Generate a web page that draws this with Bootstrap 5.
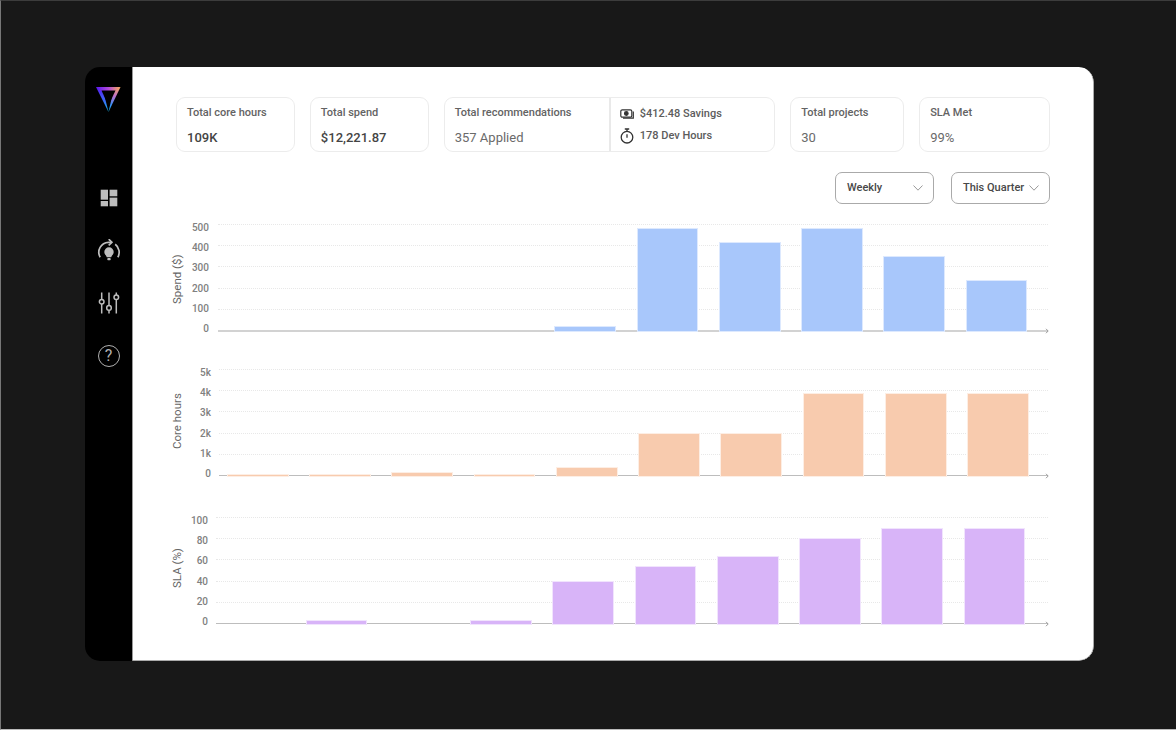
<!DOCTYPE html>
<html lang="en">
<head>
    <meta charset="UTF-8">
    <meta name="viewport" content="width=device-width, initial-scale=1.0">
    <title>Usage dashboard</title>
    <link href="https://cdn.jsdelivr.net/npm/bootstrap@5.3.0/dist/css/bootstrap.min.css" rel="stylesheet">
    <style>
        body {
            background: #181818;
            font-family: Roboto, "Liberation Sans", sans-serif;
            overflow: hidden;
        }
        .page-frame {
            height: 730px;
            padding: 66px 0 0 84px;
            border-left: 1px solid #777;
            border-top: 1px solid #3c3c3c;
            border-bottom: 1px solid #bbb;
        }
        .app-window {
            width: 1009px;
            height: 594px;
            border-radius: 15px;
            overflow: hidden;
            background: #000;
        }
        .side-rail {
            width: 47px;
            padding-top: 20px;
        }
        .rail-logo { margin-bottom: 74px; }
        .rail-icon {
            width: 24px;
            height: 24px;
            margin-bottom: 28.5px;
        }
        .rail-help {
            width: 22px;
            height: 22px;
            margin-top: 1px;
            border: 1.6px solid #b0b0b0;
            border-radius: 50%;
            color: #b0b0b0;
            font-size: 16px;
            line-height: 1;
        }
        .main-pane {
            min-width: 0;
            background: #fff;
            padding: 30px 43px 0 37px;
            border-left: 1px solid #999;
            border-right: 1px solid #aaa;
            border-bottom: 1px solid #aaa;
            border-radius: 0 15px 15px 0;
        }
        .stat-row {
            margin-left: 6px;
            gap: 15px;
        }
        .stat-box {
            height: 55px;
            border: 1px solid #ececec;
            border-radius: 9px;
            padding: 7px 10px;
        }
        .w-core { width: 119px; }
        .w-spend { width: 119px; }
        .w-recs { width: 332px; padding: 0; }
        .w-projects { width: 114px; }
        .w-sla { width: 131px; }
        .recs-left {
            width: 166px;
            padding: 7px 10px;
            border-right: 2px solid #e9e9e9;
        }
        .recs-right { padding: 6px 9px; }
        .stat-label {
            font-size: 11px;
            line-height: 15px;
            font-weight: 500;
            color: #636363;
        }
        .stat-value {
            margin-top: 9px;
            font-size: 13px;
            line-height: 17px;
            font-weight: 500;
            color: #444;
        }
        .stat-value.soft { color: #6a6a6a; font-weight: 400; }
        .saving-line {
            height: 20px;
            gap: 6px;
            font-size: 11px;
            font-weight: 500;
            color: #5c5c5c;
        }
        .saving-line + .saving-line { margin-top: 2px; }
        .filter-row {
            margin: 20px 0 0 6px;
            gap: 17px;
        }
        .filter-btn {
            width: 99px;
            height: 32px;
            padding: 0 10px 0 11px;
            border: 1.5px solid #aaa;
            border-radius: 7px;
            font-size: 11px;
            font-weight: 500;
            color: #484848;
            background: #fff;
            white-space: nowrap;
        }
        .chart-row { height: 107px; }
        .chart-spend { margin-top: 20px; }
        .chart-hours { margin-top: 38px; }
        .chart-sla { margin-top: 41px; }
        .axis-title {
            width: 14px;
            writing-mode: vertical-rl;
            transform: rotate(180deg);
            text-align: center;
            font-size: 11.5px;
            line-height: 14px;
            color: #666;
        }
        .chart-spend .axis-title { padding-bottom: 4px; }
        .chart-hours .axis-title { padding-top: 3px; }
        .chart-sla .axis-title { padding-top: 4px; }
        .tick-col {
            margin: -2px 9px -4px 0;
            font-size: 10px;
            line-height: 12px;
            font-weight: 500;
            color: #808080;
        }
        .chart-spend .tick-col { width: 25px; }
        .chart-hours .tick-col { width: 27px; margin-right: 8px; }
        .chart-sla .tick-col { width: 24px; margin-right: 8px; }
        .plot-area {
            min-width: 0;
            height: 107px;
            margin-right: 2px;
        }
        .grid-layer { inset: 0; }
        .grid-line {
            height: 0;
            border-top: 1px dotted #e8e8e8;
        }
        .grid-line.base { border-top: 1px solid #bdbdbd; }
        .chart-spend .grid-line.base {
            margin-bottom: -1px;
            border-top: 2px solid #d2d2d2;
        }
        .axis-arrow {
            right: -1px;
            bottom: -3px;
        }
        .bar-row {
            height: 107px;
            padding-left: 8.5px;
            gap: 22.55px;
        }
        .chart-hours .bar-row { padding-left: 9px; }
        .bar-item {
            width: 59.7px;
            flex: none;
        }
        .bar-spend { background: #a8c7fb; box-shadow: 0 0 0 1px #dde9fe; }
        .bar-hours { background: #f8cbae; box-shadow: 0 0 0 1px #fdeee4; }
        .bar-sla { background: #d8b4f8; box-shadow: 0 0 0 1px #f1e4fd; }
    </style>
</head>
<body>
    <div class="page-frame">
        <div class="app-window d-flex">
            <nav class="side-rail d-flex flex-column align-items-center flex-shrink-0">
                <svg class="rail-logo" width="25" height="25" viewBox="0 0 25 25">
                    <defs>
                        <linearGradient id="logoTop" x1="0" y1="0" x2="1" y2="0">
                            <stop offset="0" stop-color="#5a17f0"/>
                            <stop offset=".5" stop-color="#b048d8"/>
                            <stop offset="1" stop-color="#fbae58"/>
                        </linearGradient>
                        <linearGradient id="logoLeft" x1="0" y1="0" x2="0" y2="1">
                            <stop offset="0" stop-color="#5a17f0"/>
                            <stop offset=".55" stop-color="#3a6af5"/>
                            <stop offset="1" stop-color="#10c0f5"/>
                        </linearGradient>
                        <linearGradient id="logoRight" x1="0" y1="0" x2="0" y2="1">
                            <stop offset="0" stop-color="#fbae58"/>
                            <stop offset=".35" stop-color="#c070c8"/>
                            <stop offset=".7" stop-color="#3a8cf5"/>
                            <stop offset="1" stop-color="#10c0f5"/>
                        </linearGradient>
                    </defs>
                    <polygon points="0,0 7,3 12.5,25" fill="url(#logoLeft)"/>
                    <polygon points="24.500,0 17.500,3 12.500,25" fill="url(#logoRight)"/>
                    <polygon points="0,0 24.500,0 20,4 5,4" fill="url(#logoTop)"/>
                    <polygon points="5.500,3.500 19.500,3.500 12.400,18.500" fill="#000"/>
                </svg>
                <svg class="rail-icon" viewBox="0 0 24 24" fill="#bdbdbd">
                    <rect x="3.700" y="3.700" width="7.300" height="10"/>
                    <rect x="12.600" y="3.700" width="7.700" height="6.600"/>
                    <rect x="3.700" y="15" width="7.300" height="5.300"/>
                    <rect x="12.600" y="11.600" width="7.700" height="8.700"/>
                </svg>
                <svg class="rail-icon" viewBox="0 0 24 24" fill="none" stroke="#bdbdbd" stroke-width="1.700">
                    <path d="M3.200 18.300A10 10 0 0 1 11.500 3.300h3.300"/>
                    <path d="M11.700.2l3.200 3.100-3.200 3.100"/>
                    <path d="M18.200 5.300A10 10 0 0 1 20.800 18.300"/>
                    <path d="M9.800 18.200c-.4-1.700-2.500-2.600-2.500-5.200a4.700 4.700 0 0 1 9.400 0c0 2.600-2.100 3.500-2.500 5.200z" fill="#bdbdbd" stroke="none"/>
                    <rect x="10.300" y="19.100" width="3.400" height="2.200" rx=".8" fill="#bdbdbd" stroke="none"/>
                </svg>
                <svg class="rail-icon" viewBox="0 0 24 24" fill="none" stroke="#bdbdbd" stroke-width="1.500">
                    <path d="M4.700 1.500v6.800M4.700 13v9.500M12 1.500v13M12 19.300v3.200M19.300 1.500v2.500M19.300 8.700v13.800"/>
                    <circle cx="4.700" cy="10.700" r="2.300"/>
                    <circle cx="12" cy="16.900" r="2.300"/>
                    <circle cx="19.300" cy="6.300" r="2.300"/>
                </svg>
                <span class="rail-help d-flex align-items-center justify-content-center">?</span>
            </nav>

            <main class="main-pane flex-grow-1">
                <div class="stat-row d-flex">
                    <div class="stat-box w-core">
                        <div class="stat-label">Total core hours</div>
                        <div class="stat-value">109K</div>
                    </div>
                    <div class="stat-box w-spend">
                        <div class="stat-label">Total spend</div>
                        <div class="stat-value">$12,221.87</div>
                    </div>
                    <div class="stat-box w-recs d-flex">
                        <div class="recs-left">
                            <div class="stat-label">Total recommendations</div>
                            <div class="stat-value soft">357 Applied</div>
                        </div>
                        <div class="recs-right">
                            <div class="saving-line d-flex align-items-center">
                                <svg width="14" height="10" viewBox="0 0 14 10" fill="none" stroke="#333" stroke-width="1.200">
                                    <rect x=".8" y=".8" width="11" height="7.400" rx="1.500"/>
                                    <circle cx="6.300" cy="4.500" r="1.800" fill="#333"/>
                                    <path d="M13.300 2.500v6.700H3"/>
                                </svg>
                                <span>$412.48 Savings</span>
                            </div>
                            <div class="saving-line d-flex align-items-center">
                                <svg width="14" height="16" viewBox="0 0 14 16" fill="none" stroke="#333" stroke-width="1.300">
                                    <circle cx="7" cy="9.200" r="5.800"/>
                                    <path d="M4.800 1h4.400M7 1v2.400M7 6.200v3.600"/>
                                </svg>
                                <span>178 Dev Hours</span>
                            </div>
                        </div>
                    </div>
                    <div class="stat-box w-projects">
                        <div class="stat-label">Total projects</div>
                        <div class="stat-value soft">30</div>
                    </div>
                    <div class="stat-box w-sla">
                        <div class="stat-label">SLA Met</div>
                        <div class="stat-value soft">99%</div>
                    </div>
                </div>

                <div class="filter-row d-flex justify-content-end">
                    <button type="button" class="filter-btn d-flex align-items-center justify-content-between">
                        <span>Weekly</span>
                        <svg width="10" height="6" viewBox="0 0 10 6" fill="none" stroke="#999" stroke-width="1"><path d="M.5.5 5 5.200 9.500.5"/></svg>
                    </button>
                    <button type="button" class="filter-btn d-flex align-items-center justify-content-between">
                        <span>This Quarter</span>
                        <svg width="10" height="6" viewBox="0 0 10 6" fill="none" stroke="#999" stroke-width="1"><path d="M.5.5 5 5.200 9.500.5"/></svg>
                    </button>
                </div>

                <section class="chart-row chart-spend d-flex">
                    <div class="axis-title">Spend ($)</div>
                    <div class="tick-col d-flex flex-column justify-content-between text-end">
                        <span>500</span><span>400</span><span>300</span><span>200</span><span>100</span><span>0</span>
                    </div>
                    <div class="plot-area position-relative flex-grow-1">
                        <div class="grid-layer position-absolute d-flex flex-column justify-content-between">
                            <div class="grid-line"></div><div class="grid-line"></div><div class="grid-line"></div><div class="grid-line"></div><div class="grid-line"></div><div class="grid-line base"></div>
                        </div>
                        <svg class="axis-arrow position-absolute" width="4" height="6" viewBox="0 0 4 6" fill="none" stroke="#999"><path d="M1 .8 3.200 3 1 5.200"/></svg>
                        <div class="bar-row position-relative d-flex align-items-end">
                            <div class="bar-item"></div>
                            <div class="bar-item"></div>
                            <div class="bar-item"></div>
                            <div class="bar-item"></div>
                            <div class="bar-item bar-spend" style="height:3.3%"></div>
                            <div class="bar-item bar-spend" style="height:95.6%"></div>
                            <div class="bar-item bar-spend" style="height:82%"></div>
                            <div class="bar-item bar-spend" style="height:95.6%"></div>
                            <div class="bar-item bar-spend" style="height:69.4%"></div>
                            <div class="bar-item bar-spend" style="height:46.7%"></div>
                        </div>
                    </div>
                </section>

                <section class="chart-row chart-hours d-flex">
                    <div class="axis-title">Core hours</div>
                    <div class="tick-col d-flex flex-column justify-content-between text-end">
                        <span>5k</span><span>4k</span><span>3k</span><span>2k</span><span>1k</span><span>0</span>
                    </div>
                    <div class="plot-area position-relative flex-grow-1">
                        <div class="grid-layer position-absolute d-flex flex-column justify-content-between">
                            <div class="grid-line"></div><div class="grid-line"></div><div class="grid-line"></div><div class="grid-line"></div><div class="grid-line"></div><div class="grid-line base"></div>
                        </div>
                        <svg class="axis-arrow position-absolute" width="4" height="6" viewBox="0 0 4 6" fill="none" stroke="#999"><path d="M1 .8 3.200 3 1 5.200"/></svg>
                        <div class="bar-row position-relative d-flex align-items-end">
                            <div class="bar-item bar-hours" style="height:1%"></div>
                            <div class="bar-item bar-hours" style="height:1%"></div>
                            <div class="bar-item bar-hours" style="height:2.8%"></div>
                            <div class="bar-item bar-hours" style="height:1%"></div>
                            <div class="bar-item bar-hours" style="height:7.5%"></div>
                            <div class="bar-item bar-hours" style="height:39%"></div>
                            <div class="bar-item bar-hours" style="height:39%"></div>
                            <div class="bar-item bar-hours" style="height:76.4%"></div>
                            <div class="bar-item bar-hours" style="height:76.4%"></div>
                            <div class="bar-item bar-hours" style="height:76.4%"></div>
                        </div>
                    </div>
                </section>

                <section class="chart-row chart-sla d-flex">
                    <div class="axis-title">SLA (%)</div>
                    <div class="tick-col d-flex flex-column justify-content-between text-end">
                        <span>100</span><span>80</span><span>60</span><span>40</span><span>20</span><span>0</span>
                    </div>
                    <div class="plot-area position-relative flex-grow-1">
                        <div class="grid-layer position-absolute d-flex flex-column justify-content-between">
                            <div class="grid-line"></div><div class="grid-line"></div><div class="grid-line"></div><div class="grid-line"></div><div class="grid-line"></div><div class="grid-line base"></div>
                        </div>
                        <svg class="axis-arrow position-absolute" width="4" height="6" viewBox="0 0 4 6" fill="none" stroke="#999"><path d="M1 .8 3.200 3 1 5.200"/></svg>
                        <div class="bar-row position-relative d-flex align-items-end">
                            <div class="bar-item"></div>
                            <div class="bar-item bar-sla" style="height:3%"></div>
                            <div class="bar-item"></div>
                            <div class="bar-item bar-sla" style="height:3%"></div>
                            <div class="bar-item bar-sla" style="height:39.5%"></div>
                            <div class="bar-item bar-sla" style="height:53.6%"></div>
                            <div class="bar-item bar-sla" style="height:62.9%"></div>
                            <div class="bar-item bar-sla" style="height:79.7%"></div>
                            <div class="bar-item bar-sla" style="height:88.8%"></div>
                            <div class="bar-item bar-sla" style="height:88.8%"></div>
                        </div>
                    </div>
                </section>
            </main>
        </div>
    </div>
    <script src="https://cdn.jsdelivr.net/npm/bootstrap@5.3.0/dist/js/bootstrap.bundle.min.js"></script>
</body>
</html>
